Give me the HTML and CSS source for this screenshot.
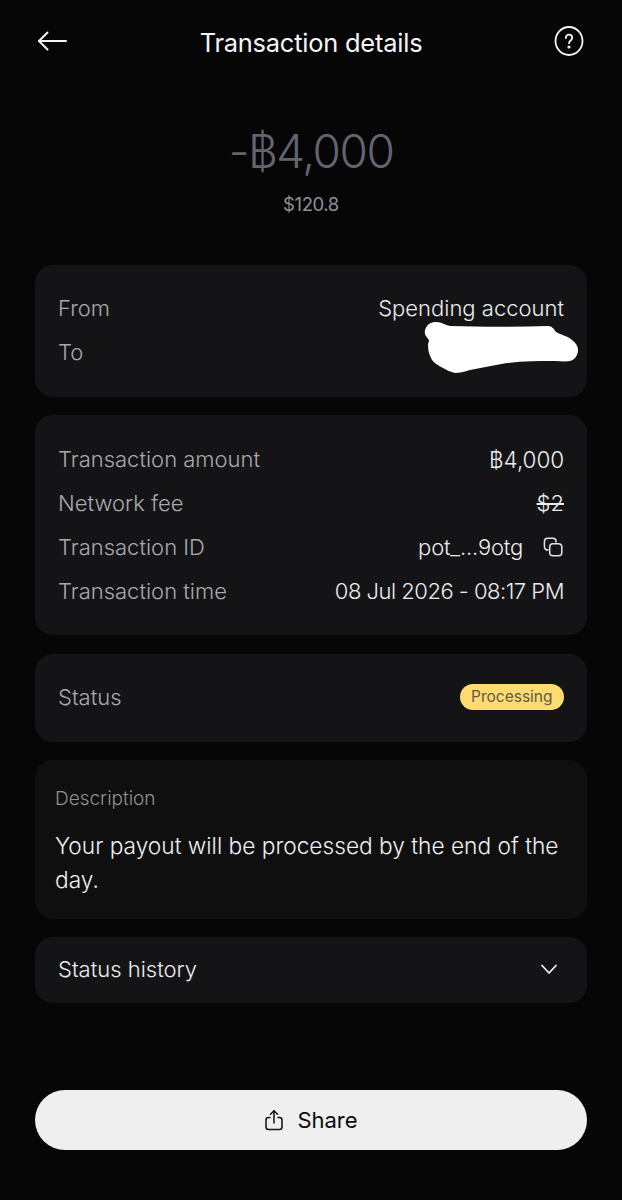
FILE: index.html
```html
<!DOCTYPE html>
<html lang="en">
<head>
  <meta charset="UTF-8">
  <meta name="viewport" content="width=device-width, initial-scale=1.0">
  <title>Transaction details</title>
  <link rel="stylesheet" href="styles.css">
</head>
<body>
  <div class="page">
    <header class="top-bar">
      <svg class="back-icon" width="30" height="20" viewBox="0 0 30 20" fill="none" stroke="#f4f4f4" stroke-width="2" stroke-linecap="round" stroke-linejoin="round">
        <path d="M29 10H2"/>
        <path d="M10.500 1.500 2 10l8.500 8.500"/>
      </svg>
      <h1 class="title">Transaction details</h1>
      <svg class="help-icon" width="30" height="30" viewBox="0 0 30 30" fill="none" stroke="#f4f4f4" stroke-width="1.800">
        <ellipse cx="15" cy="15" rx="13.500" ry="14"/>
        <path d="M11.800 12c0-2 1.400-3.300 3.200-3.300s3.200 1.300 3.200 3c0 2.700-3.200 2.800-3.200 5.500" stroke-linecap="round"/>
        <circle cx="15" cy="21" r="0.700"/>
      </svg>
    </header>

    <section class="amount">
      <div class="amount-main">-฿4,000</div>
      <div class="amount-sub">$120.8</div>
    </section>

    <section class="card card-parties">
      <div class="row">
        <span class="label">From</span>
        <span class="value">Spending account</span>
      </div>
      <div class="row">
        <span class="label">To</span>
      </div>
      <svg class="scribble" width="156" height="54" viewBox="0 0 156 54">
        <path fill="#fff" d="M1 9C3 3 7 1 12 1c6 0 9 3 14 4 32 1 66 1 98 0 4 0 6 3 8 6 5 3 12 4 16 8 4 3 6 6 6 10 0 6-4 10-8 11-5 1-10 0-15 0-16 0-32 0-48 2-13 2-25 5-37 7-6 2-11 3-15 3-5-1-8-3-12-5-5-3-10-5-12-10-2-4-3-8-3-13 0-2 1-3 1-5-2-3-5-5-4-10Z"/>
      </svg>
    </section>

    <section class="card card-details">
      <div class="row">
        <span class="label">Transaction amount</span>
        <span class="value value-tight">฿4,000</span>
      </div>
      <div class="row">
        <span class="label">Network fee</span>
        <span class="value value-struck">$2</span>
      </div>
      <div class="row">
        <span class="label">Transaction ID</span>
        <span class="value value-id">
          pot_...9otg
          <svg class="copy-icon" width="22" height="22" viewBox="0 0 20 20" fill="none" stroke="#e4e4e6" stroke-width="1.400">
            <path d="M6 12.800H5.200A3 3 0 0 1 2.200 9.800V5A3 3 0 0 1 5.200 2h4.600a3 3 0 0 1 3 3v1"/>
            <rect x="7" y="7" width="11" height="11" rx="3"/>
          </svg>
        </span>
      </div>
      <div class="row">
        <span class="label">Transaction time</span>
        <span class="value value-time">08 Jul 2026 - 08:17 PM</span>
      </div>
    </section>

    <section class="card card-status">
      <span class="label">Status</span>
      <span class="badge">Processing</span>
    </section>

    <section class="card card-description">
      <div class="description-title">Description</div>
      <p class="description-text">Your payout will be processed by the end of the day.</p>
    </section>

    <section class="card card-history">
      <span class="history-label">Status history</span>
      <svg width="18" height="12" viewBox="0 0 18 12" fill="none" stroke="#f0f0f0" stroke-width="1.800" stroke-linecap="round" stroke-linejoin="round">
        <path d="M2 2.500 9 10l7-7.500"/>
      </svg>
    </section>

    <button class="share-button">
      <svg width="20" height="22" viewBox="0 0 20 22" fill="none" stroke="#111" stroke-width="1.500" stroke-linecap="round" stroke-linejoin="round">
        <path d="M6 8.500H4.500A2.500 2.500 0 0 0 2 11v7a2.500 2.500 0 0 0 2.500 2.500h11A2.500 2.500 0 0 0 18 18v-7a2.500 2.500 0 0 0-2.500-2.500H14"/>
        <path d="M10 14V2"/>
        <path d="M6.500 5.300 10 1.800l3.500 3.500"/>
      </svg>
      Share
    </button>
  </div>
</body>
</html>
```

FILE: styles.css
```css
body {
  margin: 0;
  padding: 0;
  background-color: #060607;
  color: #f4f4f4;
  font-family: 'Inter', 'Noto Sans', sans-serif;
}

.page {
  display: flex;
  flex-direction: column;
  height: 1200px;
  padding: 0 35px;
  box-sizing: border-box;
}

.top-bar {
  display: flex;
  justify-content: space-between;
  align-items: center;
  height: 82px;
  position: relative;
}

.back-icon {
  margin-left: 2px;
}

.help-icon {
  margin-right: 3px;
  margin-bottom: 1px;
}

.title {
  margin: 2px 0 0;
  font-size: 25.4px;
  font-weight: 400;
  letter-spacing: -0.2px;
  color: #f6f6f6;
  position: absolute;
  left: 0;
  right: 0;
  text-align: center;
}

.amount {
  text-align: center;
  height: 183px;
}

.amount-main {
  margin-top: 39px;
  font-size: 46px;
  line-height: 60px;
  font-weight: 300;
  letter-spacing: -1.500px;
  color: #64646f;
}

.amount-sub {
  margin-top: 11px;
  font-size: 18.500px;
  line-height: 24px;
  letter-spacing: -0.4px;
  color: #8f8f97;
}

.card {
  background: #141416;
  border-radius: 18px;
  margin-bottom: 18px;
  box-sizing: border-box;
}

.row {
  display: flex;
  justify-content: space-between;
  align-items: center;
  height: 44px;
}

.label {
  font-size: 22px;
  font-weight: 300;
  color: #a9a9ae;
}

.value {
  font-size: 22px;
  font-weight: 300;
  color: #ececee;
}

.value-tight {
  letter-spacing: -0.1px;
  font-size: 22.500px;
}

.value-time {
  letter-spacing: -0.5px;
}

.value-struck {
  text-decoration: line-through;
}

.value-id {
  display: flex;
  align-items: center;
  gap: 19px;
  letter-spacing: -0.2px;
}

.card-parties {
  height: 132px;
  padding: 21px 23px;
  position: relative;
}

/* hand-drawn redaction over the recipient */
.scribble {
  position: absolute;
  top: 56px;
  right: 7px;
}

.card-details {
  height: 220px;
  margin-bottom: 19px;
  padding: 22px 23px;
}

.card-status {
  height: 88px;
  padding: 0 23px 2px;
  display: flex;
  justify-content: space-between;
  align-items: center;
}

.badge {
  background: #ffdb70;
  color: #5e5a4a;
  font-size: 15.500px;
  line-height: 26px;
  padding: 0 11.500px;
  border-radius: 13px;
}

.card-description {
  height: 159px;
  padding: 26px 20px;
  background: #0f0f10;
}

.description-title {
  font-size: 19px;
  font-weight: 300;
  line-height: 26px;
  color: #8f8f97;
}

.description-text {
  margin: 17px 0 0;
  font-size: 22.700px;
  font-weight: 300;
  line-height: 34px;
  color: #f0f0f0;
}

.card-history {
  height: 66px;
  padding: 0 29px 2px 23px;
  display: flex;
  justify-content: space-between;
  align-items: center;
}

.history-label {
  font-size: 22px;
  font-weight: 300;
  color: #ececee;
}

.share-button {
  margin-top: 69px;
  height: 60px;
  border: none;
  border-radius: 30px;
  background: #efefef;
  color: #0b0b0b;
  font-family: inherit;
  font-size: 22px;
  display: flex;
  justify-content: center;
  align-items: center;
  gap: 13px;
}
```
